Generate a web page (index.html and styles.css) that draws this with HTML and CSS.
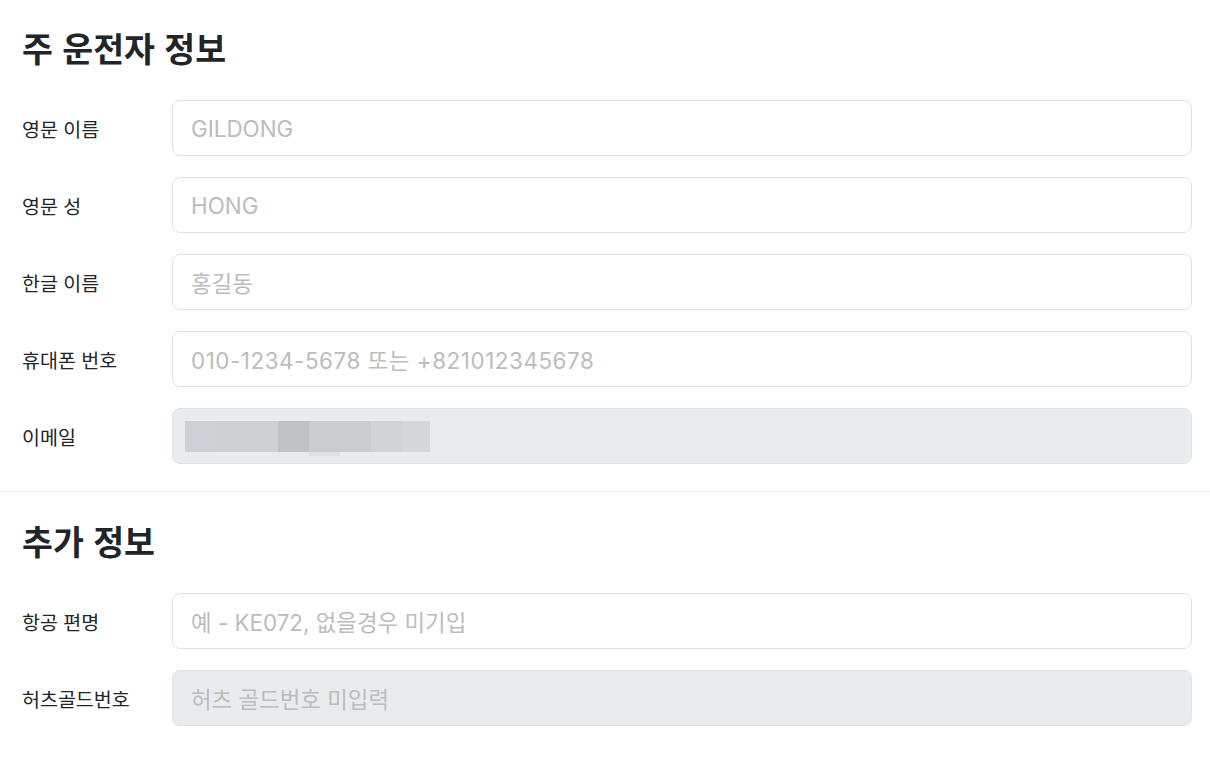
FILE: index.html
```html
<!DOCTYPE html>
<html lang="ko">
<head>
<meta charset="utf-8">
<link rel="stylesheet" href="styles.css">
</head>
<body>
<section class="section">
  <h2 class="title">주 운전자 정보</h2>
  <div class="rows">
    <div class="row"><label class="label">영문 이름</label><div class="input"><span class="ph">GILDONG</span></div></div>
    <div class="row"><label class="label">영문 성</label><div class="input"><span class="ph">HONG</span></div></div>
    <div class="row"><label class="label">한글 이름</label><div class="input"><span class="ph">홍길동</span></div></div>
    <div class="row"><label class="label">휴대폰 번호</label><div class="input"><span class="ph num">010-1234-5678 또는 +821012345678</span></div></div>
    <div class="row"><label class="label">이메일</label><div class="input disabled blur-wrap">
      <div class="blur">
        <div class="px b1"></div><div class="px b2"></div><div class="px b3"></div><div class="px b4"><div class="tail"></div></div><div class="px b5"></div><div class="px b6"></div>
      </div>
    </div></div>
  </div>
</section>
<hr class="divider">
<section class="section">
  <h2 class="title">추가 정보</h2>
  <div class="rows">
    <div class="row"><label class="label">항공 편명</label><div class="input"><span class="ph">예 - KE072, 없을경우 미기입</span></div></div>
    <div class="row"><label class="label">허츠골드번호</label><div class="input disabled"><span class="ph">허츠 골드번호 미입력</span></div></div>
  </div>
</section>
</body>
</html>
```

FILE: styles.css
```css
html, body {
  margin: 0;
  padding: 0;
  background: #fff;
}
body {
  font-family: Inter, "Noto Sans CJK KR", sans-serif;
  color: #212529;
}
.section {
  padding: 29px 18px 27px 22px;
}
.divider + .section {
  padding-top: 30px;
}
.title {
  margin: 0 0 33px 0;
  font-family: "Noto Sans CJK KR", sans-serif;
  font-size: 33.6px;
  line-height: 38px;
  font-weight: 600;
  color: #212529;
}
.rows {
  display: flex;
  flex-direction: column;
  gap: 21px;
}
.row {
  display: flex;
  align-items: center;
}
.label {
  width: 150px;
  flex: none;
  font-family: "Noto Sans CJK KR", sans-serif;
  font-size: 19.5px;
  color: #212529;
}
.input {
  flex: 1;
  height: 54px;
  border: 1px solid #dee2e6;
  border-radius: 8px;
  background: #fff;
  display: flex;
  align-items: center;
  padding: 0 18px;
}
.input.disabled {
  background: #e9ecef;
}
.ph {
  font-size: 22.4px;
  color: #bcbcbc;
  letter-spacing: 0;
}
.ph.num {
  letter-spacing: 0.55px;
}
.blur-wrap {
  padding-left: 12px;
}
.blur {
  display: flex;
  height: 31px;
}
.px {
  height: 31px;
  position: relative;
}
.b1 { width: 31px; background: #cdd0d4; }
.b2 { width: 62px; background: #ccd0d3; }
.b3 { width: 31px; background: #bec2c5; }
.b4 { width: 62px; background: #c9cdd0; }
.b5 { width: 31px; background: #d0d4d7; }
.b6 { width: 28px; background: #d5d8db; }
.tail {
  position: absolute;
  left: 0;
  top: 31px;
  width: 31px;
  height: 4px;
  background: #dfe2e5;
}
.divider {
  margin: 0;
  border: 0;
  border-top: 1px solid #e9ecef;
}
```
